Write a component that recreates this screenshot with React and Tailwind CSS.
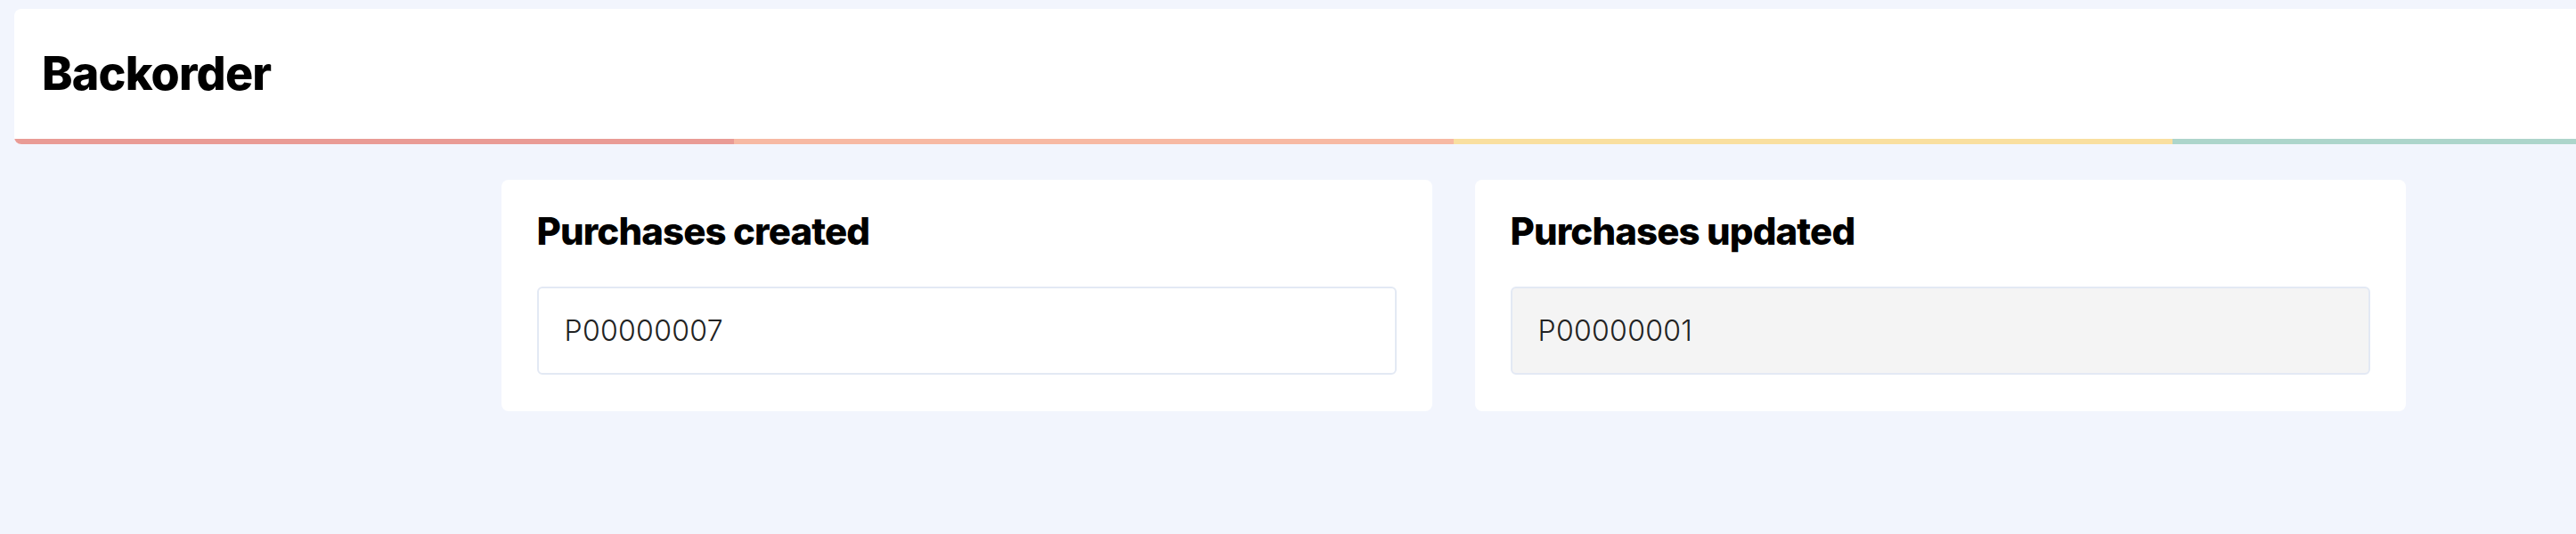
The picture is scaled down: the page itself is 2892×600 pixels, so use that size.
export default function App() {
  const font = { fontFamily: "Inter, Roboto, 'Liberation Sans', sans-serif" };
  return (
    <div className="min-h-[600px] w-full overflow-hidden bg-[#f2f5fd]" style={font}>
      <div className="w-[3263px] px-4 pt-[10px]">
        <header className="overflow-hidden rounded-lg bg-white">
          <div className="flex h-[146px] items-center pl-[31px]">
            <h1 className="text-[52px] font-extrabold leading-none tracking-[-0.8px] text-black">Backorder</h1>
          </div>
          <div className="flex h-[6px]">
            <div className="flex-1 bg-[#e99b95]" />
            <div className="flex-1 bg-[#f7b9a3]" />
            <div className="flex-1 bg-[#f9dfa0]" />
            <div className="flex-1 bg-[#add5cb]" />
          </div>
        </header>
        <div className="mx-auto mt-10 flex w-[2138px] gap-12">
          <div className="flex-1 rounded-lg bg-white px-10 pb-[41px] pt-[33px]">
            <h2 className="text-[42px] font-extrabold leading-[50px] tracking-[-0.9px] text-black">Purchases created</h2>
            <div className="mt-[37px] flex h-[99px] items-center rounded-[6px] border-2 border-[#e3e9f4] bg-white pl-[29px] text-[32px] font-light tracking-[0.3px] text-[#222]">
              P00000007
            </div>
          </div>
          <div className="flex-1 rounded-lg bg-white px-10 pb-[41px] pt-[33px]">
            <h2 className="text-[42px] font-extrabold leading-[50px] tracking-[-0.9px] text-black">Purchases updated</h2>
            <div className="mt-[37px] flex h-[99px] items-center rounded-[6px] border-2 border-[#e3e9f4] bg-[#f4f4f4] pl-[29px] text-[32px] font-light tracking-[0.3px] text-[#222]">
              P00000001
            </div>
          </div>
        </div>
      </div>
    </div>
  );
}
